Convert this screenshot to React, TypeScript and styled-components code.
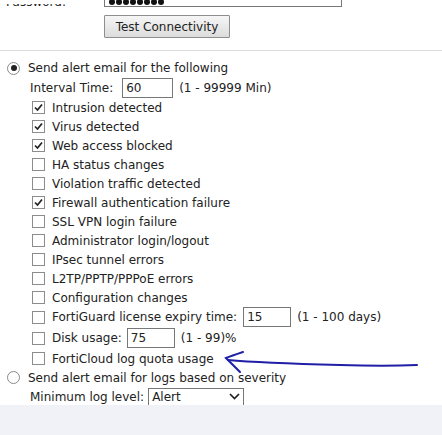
import React from 'react';
import styled, { createGlobalStyle } from 'styled-components';

const GlobalStyle = createGlobalStyle`
  html, body {
    margin: 0;
    padding: 0;
    background: #f0f2f7;
  }
  body {
    font-family: 'DejaVu Sans', Verdana, sans-serif;
    font-size: 12px;
    color: #222;
  }
`;

const Panel = styled.div`
  position: relative;
  background: #fff;
  height: 405px;
  overflow: hidden;
`;

const TopBlock = styled.div`
  display: flex;
  flex-direction: column;
  gap: 8px;
`;

const ClipRow = styled.div`
  height: 7px;
  display: flex;
  align-items: flex-end;
  overflow: hidden;
`;

const CutLabel = styled.span`
  width: 66px;
  margin-right: 38px;
  text-align: right;
  align-self: flex-end;
  line-height: 10px;
  height: 3px;
  overflow: hidden;
  display: flex;
  align-items: flex-end;
  justify-content: flex-end;
`;

const PasswordBox = styled.div`
  width: 238px;
  height: 20px;
  border: 1px solid #777;
  border-top: none;
  box-sizing: border-box;
  display: flex;
  align-items: flex-end;
  gap: 1px;
  padding: 0 0 1px 4px;
  overflow: hidden;
`;

const Dot = styled.span`
  width: 6px;
  height: 6px;
  border-radius: 50%;
  background: #111;
  margin-bottom: 0;
`;

const ButtonRow = styled.div`
  padding-left: 104px;
`;

const Button = styled.button`
  width: 126px;
  height: 23px;
  font-family: 'DejaVu Sans', Verdana, sans-serif;
  font-size: 12px;
  color: #222;
  border: 1px solid #8e8e8e;
  border-radius: 1px;
  background: linear-gradient(#f6f6f6, #dcdcdc);
  padding: 0;
`;

const Divider = styled.div`
  margin-top: 12px;
  height: 1px;
  background: #dcdcdc;
`;

const Section = styled.div`
  padding: 7px 0 0 7px;
  display: flex;
  flex-direction: column;
`;

const Row = styled.div<{ $indent?: number; $h?: number }>`
  display: flex;
  align-items: center;
  height: ${(p) => p.$h ?? 19}px;
  padding-left: ${(p) => p.$indent ?? 0}px;
  white-space: nowrap;
`;

const Radio = styled.span<{ $on?: boolean }>`
  width: 11px;
  height: 11px;
  border-radius: 50%;
  border: 1px solid #8a8a8a;
  background: #fff;
  margin-right: 8px;
  display: flex;
  align-items: center;
  justify-content: center;
  flex-shrink: 0;
  &::after {
    content: '';
    display: ${(p) => (p.$on ? 'block' : 'none')};
    width: 6px;
    height: 6px;
    border-radius: 50%;
    background: #222;
  }
`;

const Box = styled.span`
  width: 11px;
  height: 11px;
  border: 1px solid #8c8c8c;
  background: #fff;
  margin-right: 7px;
  display: flex;
  align-items: center;
  justify-content: center;
  flex-shrink: 0;
`;

const Field = styled.div<{ $w: number; $h?: number; $gap?: number }>`
  width: ${(p) => p.$w}px;
  height: ${(p) => p.$h ?? 20}px;
  box-sizing: border-box;
  border: 1px solid #777;
  display: flex;
  align-items: center;
  padding-left: 3px;
  margin: 0 6px 0 ${(p) => p.$gap ?? 4}px;
`;

const Select = styled.div`
  width: 96px;
  height: 18px;
  box-sizing: border-box;
  border: 1px solid #777;
  display: flex;
  align-items: center;
  justify-content: space-between;
  padding: 0 3px 0 3px;
  margin-left: 4px;
`;

const Overlay = styled.svg`
  position: absolute;
  left: 0;
  top: 0;
  pointer-events: none;
`;

function Check({ on }: { on?: boolean }) {
  return (
    <Box>
      {on && (
        <svg width="9" height="9" viewBox="0 0 9 9">
          <path d="M1 4.5 L3.5 7 L8 1.5" fill="none" stroke="#222" strokeWidth="1.7" />
        </svg>
      )}
    </Box>
  );
}

const items: [string, boolean][] = [
  ['Intrusion detected', true],
  ['Virus detected', true],
  ['Web access blocked', true],
  ['HA status changes', false],
  ['Violation traffic detected', false],
  ['Firewall authentication failure', true],
  ['SSL VPN login failure', false],
  ['Administrator login/logout', false],
  ['IPsec tunnel errors', false],
  ['L2TP/PPTP/PPPoE errors', false],
  ['Configuration changes', false],
];

export default function App() {
  return (
    <>
      <GlobalStyle />
      <Panel>
        <TopBlock>
          <ClipRow>
            <CutLabel>Password:</CutLabel>
            <PasswordBox>
              {Array.from({ length: 8 }, (_, i) => (
                <Dot key={i} />
              ))}
            </PasswordBox>
          </ClipRow>
          <ButtonRow>
            <Button>Test Connectivity</Button>
          </ButtonRow>
        </TopBlock>
        <Divider />
        <Section>
          <Row $h={20}>
            <Radio $on />
            Send alert email for the following
          </Row>
          <Row $indent={23} $h={20}>
            Interval Time:
            <Field $w={51} $gap={9}>60</Field>
            (1 - 99999 Min)
          </Row>
          {items.map(([label, on]) => (
            <Row key={label} $indent={25}>
              <Check on={on} />
              {label}
            </Row>
          ))}
          <Row $indent={25} $h={20}>
            <Check />
            FortiGuard license expiry time:
            <Field $w={48} $gap={6}>15</Field>
            (1 - 100 days)
          </Row>
          <Row $indent={25} $h={22}>
            <Check />
            Disk usage:
            <Field $w={48} $gap={5}>75</Field>
            (1 - 99)%
          </Row>
          <Row $indent={25}>
            <Check />
            FortiCloud log quota usage
          </Row>
          <Row>
            <Radio />
            Send alert email for logs based on severity
          </Row>
          <Row $indent={23}>
            Minimum log level:
            <Select>
              Alert
              <svg width="11" height="7" viewBox="0 0 11 7">
                <path d="M1 1 L5.5 5.5 L10 1" fill="none" stroke="#222" strokeWidth="1.7" />
              </svg>
            </Select>
          </Row>
        </Section>
        <Overlay width="442" height="405">
          <path
            d="M243 352 C237 354 231 356 226 358 C230 362 234 366 240 372"
            fill="none"
            stroke="#1f1fa8"
            strokeWidth="2"
            strokeLinecap="round"
          />
          <path
            d="M228 360 C260 363 300 364 340 365 C370 366 395 366 417 365"
            fill="none"
            stroke="#1f1fa8"
            strokeWidth="2"
            strokeLinecap="round"
          />
        </Overlay>
      </Panel>
    </>
  );
}
